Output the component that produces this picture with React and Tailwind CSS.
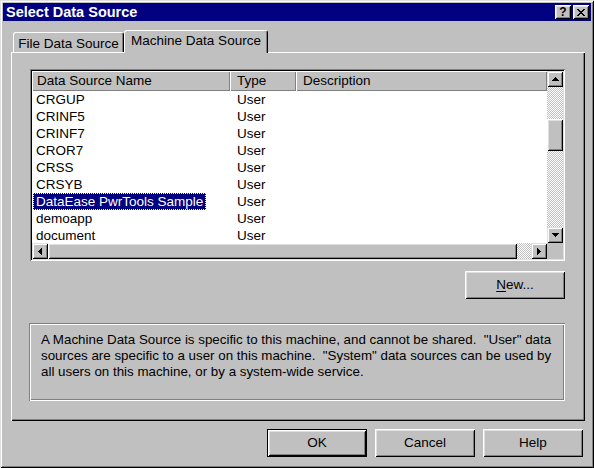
const RAISED = "bg-[#c0c0c0] shadow-[inset_1px_1px_#fff,inset_-1px_-1px_#000,inset_2px_2px_#dfdfdf,inset_-2px_-2px_#808080]";
const SBTN = "w-[16px] h-[16px] shrink-0 bg-[#c0c0c0] flex items-center justify-center shadow-[inset_1px_1px_#dfdfdf,inset_-1px_-1px_#000,inset_2px_2px_#fff,inset_-2px_-2px_#808080]";
const CHECKER = "bg-[image:repeating-conic-gradient(#c0c0c0_0_25%,#ffffff_0_50%)] bg-[length:2px_2px]";

function UpArrow({ className = "" }) {
  return (
    <svg width="7" height="4" viewBox="0 0 7 4" className={className} shapeRendering="crispEdges">
      <path d="M3 0h1v1h1v1h1v1h1v1H0V3h1V2h1V1h1z" fill="#000" />
    </svg>
  );
}
function RightArrow({ className = "" }) {
  return (
    <svg width="4" height="7" viewBox="0 0 4 7" className={className} shapeRendering="crispEdges">
      <path d="M0 0h1v1h1v1h1v1h1v1h-1v1h-1v1h-1v1H0z" fill="#000" />
    </svg>
  );
}

const rows = [
  "CRGUP",
  "CRINF5",
  "CRINF7",
  "CROR7",
  "CRSS",
  "CRSYB",
  "DataEase PwrTools Sample",
  "demoapp",
  "document",
];

export default function App() {
  return (
    <div className="w-[594px] h-[468px] bg-[#c0c0c0] p-[3px] flex flex-col font-['Liberation_Sans',Arial,sans-serif] text-[13.5px] text-black overflow-hidden select-none shadow-[inset_1px_1px_#dfdfdf,inset_-1px_-1px_#000,inset_2px_2px_#fff,inset_-2px_-2px_#808080]">
      {/* Title bar */}
      <div className="h-[18px] shrink-0 bg-[#000080] flex items-center justify-between pl-[3px] pr-[2px]">
        <span className="text-white font-bold text-[14.5px] leading-none whitespace-nowrap">Select Data Source</span>
        <div className="flex gap-[2px]">
          <div className={"w-[16px] h-[14px] flex items-center justify-center text-[12px] font-bold leading-none " + RAISED}>?</div>
          <div className={"w-[16px] h-[14px] flex items-center justify-center " + RAISED}>
            <svg width="8" height="7" viewBox="0 0 8 7" shapeRendering="crispEdges">
              <path d="M0 0h2v1H0zM6 0h2v1H6zM1 1h2v1H1zM5 1h2v1H5zM2 2h4v1H2zM3 3h2v1H3zM2 4h4v1H2zM1 5h2v1H1zM5 5h2v1H5zM0 6h2v1H0zM6 6h2v1H6z" fill="#000" />
            </svg>
          </div>
        </div>
      </div>

      {/* Tabs */}
      <div className="mt-[9px] ml-[8px] flex items-start shrink-0">
        <div className="mt-[2px] ml-[2px] w-[111px] h-[20px] border-l border-t border-white border-r border-r-black rounded-t-[3px] shadow-[inset_-1px_0_#808080] flex items-center justify-center pt-[3px] whitespace-nowrap">
          File Data Source
        </div>
        <div className="relative z-10 -mb-[1px] w-[144px] h-[23px] bg-[#c0c0c0] border-l border-t border-white border-r border-r-black rounded-t-[3px] shadow-[inset_-1px_0_#808080] flex items-center justify-center pb-[1px] whitespace-nowrap">
          Machine Data Source
        </div>
      </div>

      {/* Tab pane */}
      <div className="ml-[8px] w-[574px] h-[369px] shrink-0 pt-[17px] pl-[19px] flex flex-col shadow-[inset_1px_1px_#fff,inset_-1px_-1px_#000,inset_-2px_-2px_#808080]">
        {/* List view */}
        <div className="w-[535px] h-[192px] bg-white p-[2px] flex flex-col shadow-[inset_1px_1px_#808080,inset_-1px_-1px_#fff,inset_2px_2px_#000,inset_-2px_-2px_#dfdfdf]">
          <div className="flex h-[172px]">
            <div className="w-[515px] overflow-hidden flex flex-col">
              <div className="flex h-[20px] shrink-0 bg-[#c0c0c0]">
                <div className="w-[198px] pl-[5px] pt-[1px] flex items-center whitespace-nowrap shadow-[inset_1px_1px_#fff,inset_-1px_-1px_#808080]">Data Source Name</div>
                <div className="w-[66px] pl-[7px] pt-[1px] flex items-center shadow-[inset_1px_1px_#fff,inset_-1px_-1px_#808080]">Type</div>
                <div className="flex-1 pl-[7px] pt-[1px] flex items-center shadow-[inset_1px_1px_#fff,inset_-1px_-1px_#808080]">Description</div>
              </div>
              {rows.map((name) => (
                <div key={name} className="flex h-[17px] shrink-0 items-stretch">
                  <div className="w-[198px] flex items-stretch whitespace-nowrap">
                    {name === "DataEase PwrTools Sample" ? (
                      <span className="ml-[1px] px-[2px] pt-[1px] bg-[#000080] text-white border border-dotted border-[#ffff80] flex items-center">{name}</span>
                    ) : (
                      <span className="pl-[4px] pt-[1px] flex items-center">{name}</span>
                    )}
                  </div>
                  <div className="w-[66px] pl-[7px] pt-[1px] flex items-center">User</div>
                </div>
              ))}
            </div>
            {/* vertical scrollbar */}
            <div className={"w-[16px] flex flex-col " + CHECKER}>
              <div className={SBTN}><UpArrow /></div>
              <div className="h-[32px] shrink-0" />
              <div className={"h-[32px] w-[16px] shrink-0 " + RAISED} />
              <div className="flex-1" />
              <div className={SBTN}><UpArrow className="rotate-180" /></div>
            </div>
          </div>
          <div className="flex h-[16px]">
            <div className={"w-[515px] flex " + CHECKER}>
              <div className={SBTN}><RightArrow className="rotate-180" /></div>
              <div className={"w-[469px] h-[16px] shrink-0 " + RAISED} />
              <div className="flex-1" />
              <div className={SBTN}><RightArrow /></div>
            </div>
            <div className="w-[16px] bg-[#c0c0c0]" />
          </div>
        </div>

        {/* New button */}
        <div className="w-[535px] flex justify-end mt-[10px]">
          <div className={"w-[100px] h-[28px] flex items-center justify-center " + RAISED}>
            <span><span className="underline underline-offset-2">N</span>ew...</span>
          </div>
        </div>

        {/* Description group box */}
        <div className="mt-[24px] -ml-[1px] w-[536px] h-[78px] pt-[9px] pl-[12px] text-[13.35px] leading-[16px] whitespace-pre shadow-[inset_1px_1px_#808080,inset_-1px_-1px_#fff,inset_2px_2px_#fff,inset_-2px_-2px_#808080]">
          <div>A Machine Data Source is specific to this machine, and cannot be shared.  "User" data</div>
          <div>sources are specific to a user on this machine.  "System" data sources can be used by</div>
          <div>all users on this machine, or by a system-wide service.</div>
        </div>
      </div>

      {/* Bottom buttons */}
      <div className="mt-[8px] flex justify-end gap-[8px] pr-[8px]">
        <div className="w-[100px] h-[28px] bg-[#c0c0c0] flex items-center justify-center shadow-[inset_1px_1px_#000,inset_-1px_-1px_#000,inset_2px_2px_#fff,inset_-2px_-2px_#000,inset_3px_3px_#dfdfdf,inset_-3px_-3px_#808080]">OK</div>
        <div className={"w-[100px] h-[28px] flex items-center justify-center " + RAISED}>Cancel</div>
        <div className={"w-[100px] h-[28px] flex items-center justify-center " + RAISED}>Help</div>
      </div>
    </div>
  );
}
